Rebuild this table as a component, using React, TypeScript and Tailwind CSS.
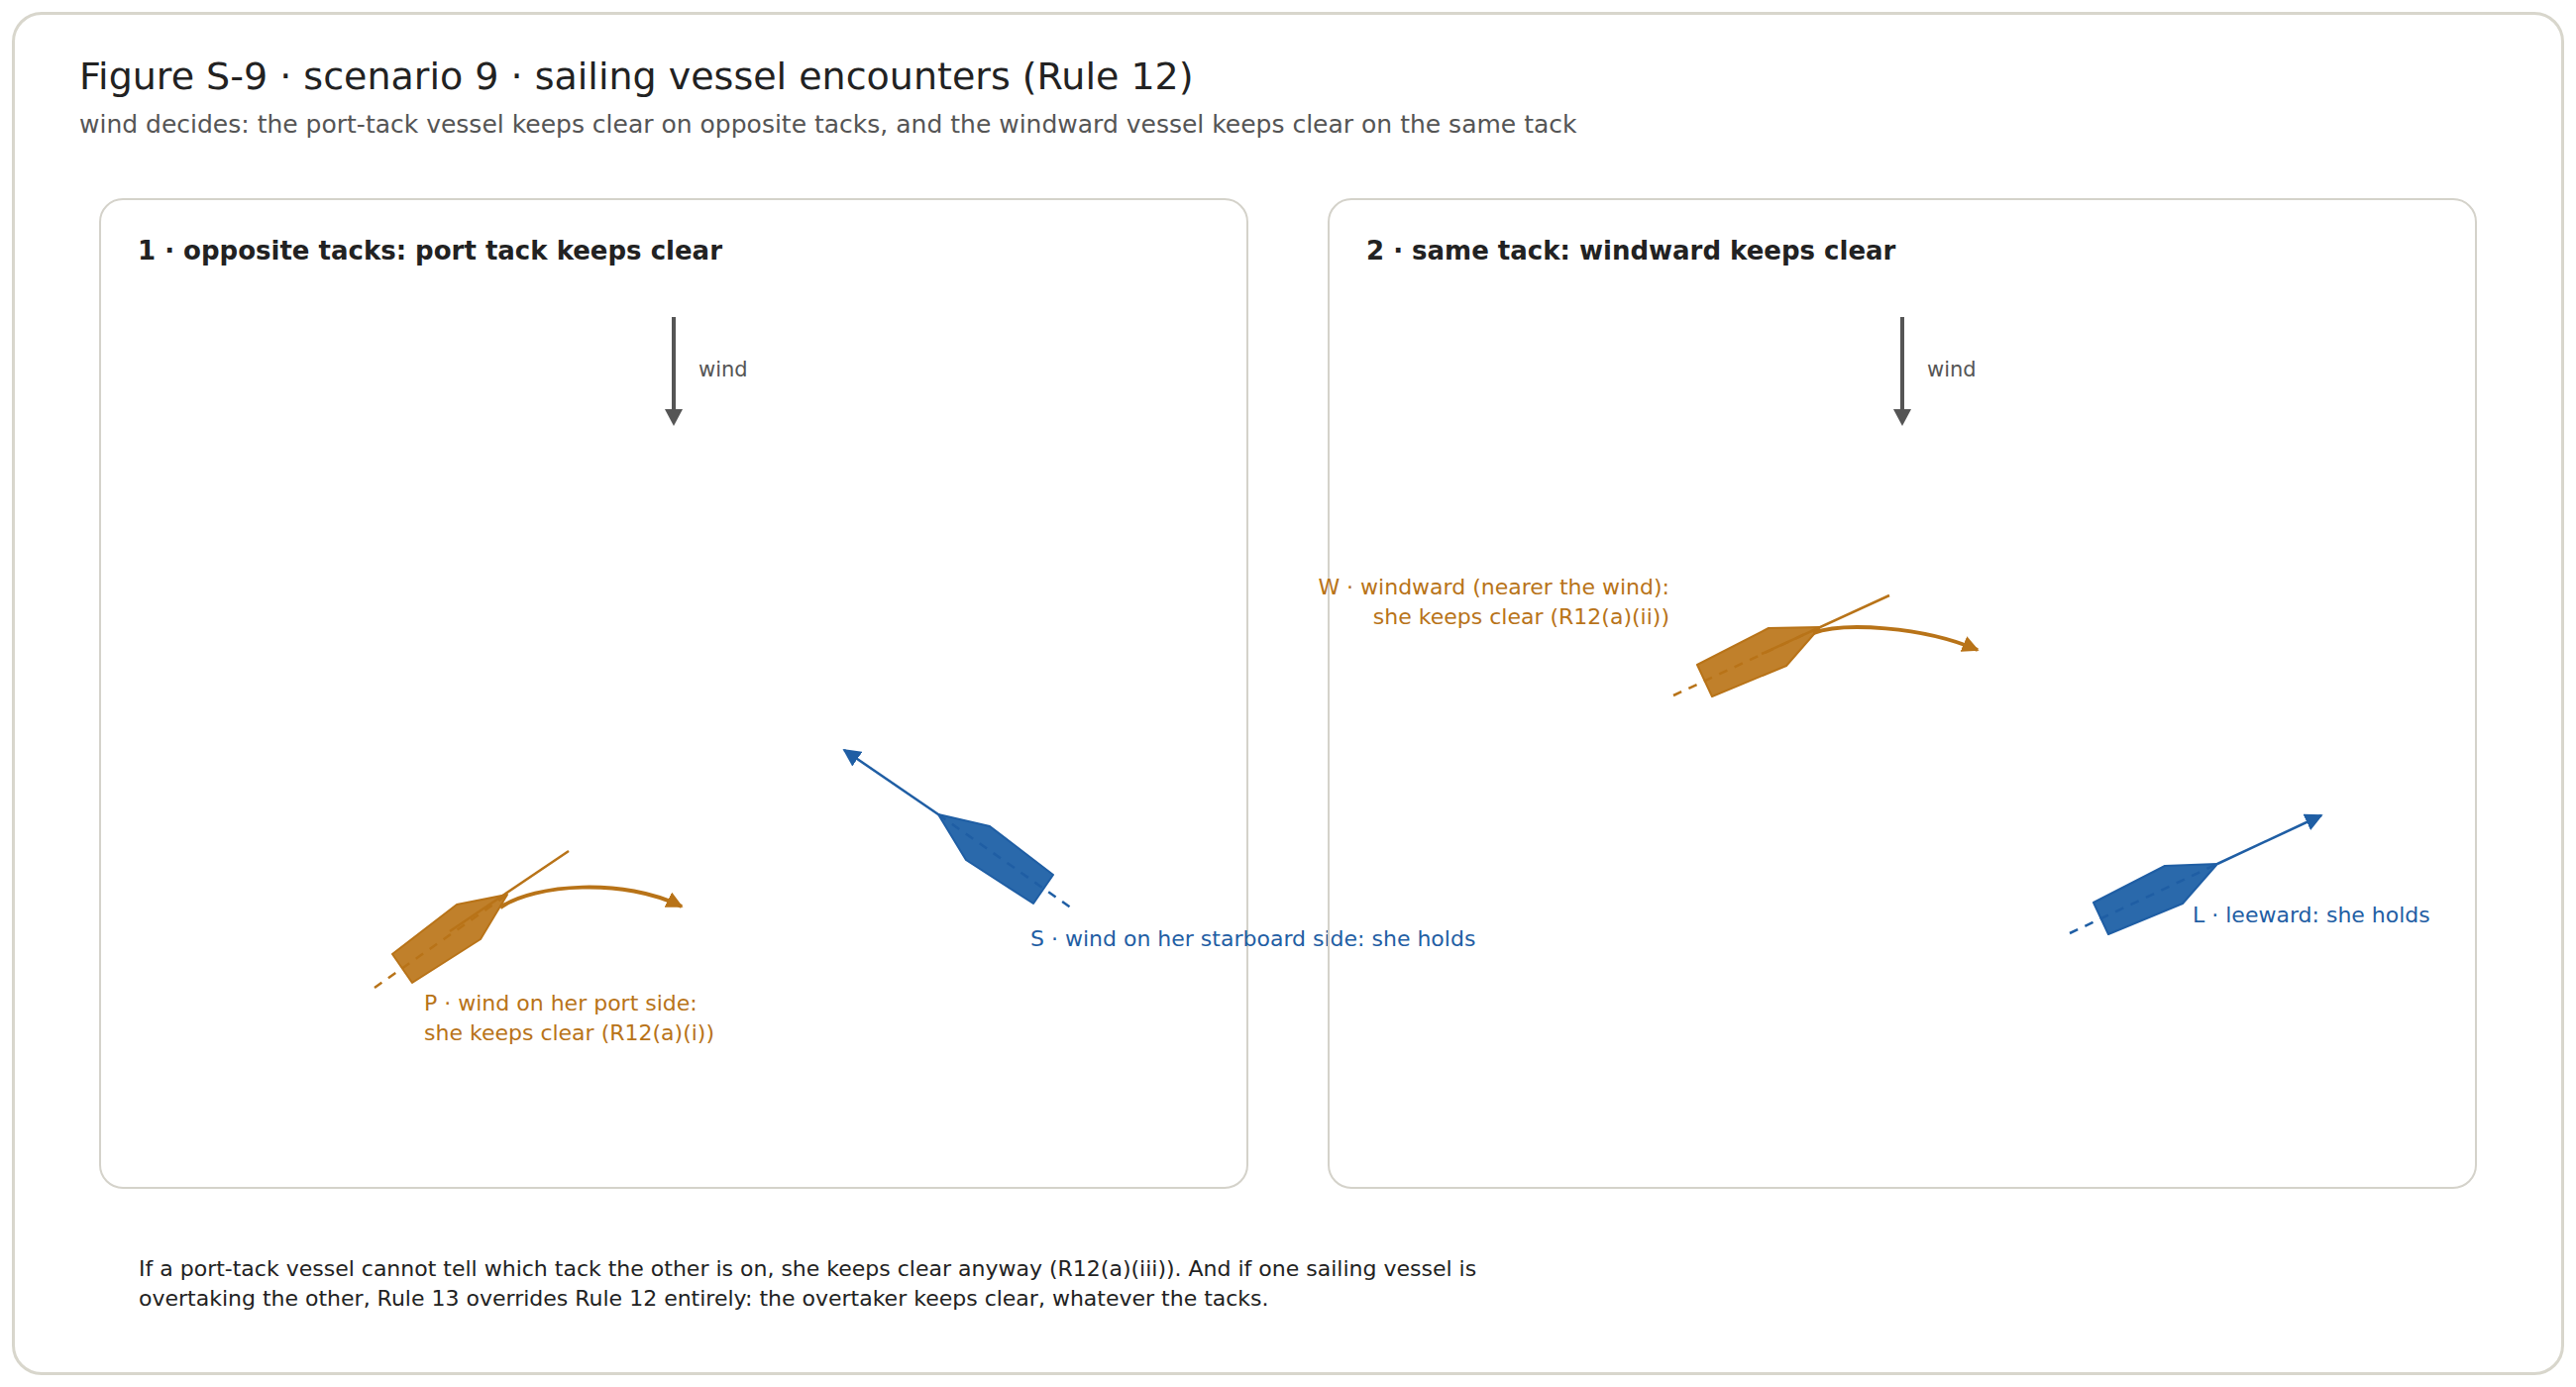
const ORANGE = "#b87318"
const ORANGE_FILL = "#c0802b"
const BLUE = "#1f5ea4"
const BLUE_FILL = "#2a69ab"
const GRAY = "#555555"

function Markers({ id }: { id: string }) {
  return (
    <defs>
      <marker id={`${id}-o`} viewBox="0 0 10 10" refX="9" refY="5" markerUnits="userSpaceOnUse" markerWidth="17" markerHeight="17" orient="auto">
        <path d="M0,0 L10,5 L0,10 z" fill={ORANGE} />
      </marker>
      <marker id={`${id}-b`} viewBox="0 0 10 10" refX="9" refY="5" markerUnits="userSpaceOnUse" markerWidth="18" markerHeight="18" orient="auto">
        <path d="M0,0 L10,5 L0,10 z" fill={BLUE} />
      </marker>
    </defs>
  )
}

function Wind() {
  return (
    <g>
      <line x1="580" y1="120" x2="580" y2="216" stroke={GRAY} strokeWidth="4" />
      <polygon points="571,213 589,213 580,230" fill={GRAY} />
      <text x="605" y="180" fontSize="21" fill={GRAY}>wind</text>
    </g>
  )
}

function Panel({ title, children }: { title: string; children: React.ReactNode }) {
  return (
    <div className="h-[1000px] border-2 border-[#d4d2ca] rounded-[24px] flex flex-col">
      <div className="h-[100px] pt-[35px] pl-[37px] text-[26px] leading-[32px] font-bold text-[#222222]">{title}</div>
      <svg width="1156" height="896" viewBox="2 102 1156 896" className="overflow-visible" style={{ fontFamily: "'DejaVu Sans', sans-serif" }}>
        {children}
      </svg>
    </div>
  )
}

export default function App() {
  return (
    <div className="w-[2600px] h-[1400px] bg-white p-[12px]" style={{ fontFamily: "'DejaVu Sans', 'Liberation Sans', sans-serif" }}>
      <div className="h-full border-[3px] border-[#d8d6cc] rounded-[30px] pt-[39px]">
        <div className="pl-[65px]">
          <h1 className="text-[38px] leading-[46px] text-[#222222]">Figure S-9 · scenario 9 · sailing vessel encounters (Rule 12)</h1>
          <p className="mt-[11px] text-[25px] leading-[30px] text-[#555555]">
            wind decides: the port-tack vessel keeps clear on opposite tacks, and the windward vessel keeps clear on the same tack
          </p>
        </div>

        <div className="mt-[59px] px-[85px] grid grid-cols-2 gap-[80px]">
          <Panel title="1 · opposite tacks: port tack keeps clear">
            <Markers id="p1" />
            <Wind />
            {/* port-tack vessel */}
            <polygon points="296,763 361,713 412,703 385,748 316,792" fill={ORANGE_FILL} stroke={ORANGE} strokeWidth="2" strokeLinejoin="round" />
            <line x1="278" y1="797" x2="412" y2="703" stroke={ORANGE} strokeWidth="2.5" strokeDasharray="9 8" />
            <line x1="354" y1="740" x2="474" y2="659" stroke={ORANGE} strokeWidth="2.5" />
            <path d="M405,716 C440,692 530,686 588,715" fill="none" stroke={ORANGE} strokeWidth="4" markerEnd="url(#p1-o)" />
            <text x="328" y="820" fontSize="22" fill={ORANGE}>P · wind on her port side:</text>
            <text x="328" y="850" fontSize="22" fill={ORANGE}>she keeps clear (R12(a)(i))</text>
            {/* starboard-tack vessel */}
            <polygon points="847,622 899,634 963,683 943,712 875,668" fill={BLUE_FILL} stroke={BLUE} strokeWidth="2" strokeLinejoin="round" />
            <line x1="847" y1="622" x2="982" y2="717" stroke={BLUE} strokeWidth="2.5" strokeDasharray="9 8" />
            <line x1="847" y1="622" x2="752" y2="557" stroke={BLUE} strokeWidth="2.5" markerEnd="url(#p1-b)" />
            <text x="940" y="755" fontSize="22" fill={BLUE}>S · wind on her starboard side: she holds</text>
          </Panel>

          <Panel title="2 · same tack: windward keeps clear">
            <Markers id="p2" />
            <Wind />
            {/* windward vessel */}
            <text x="345" y="400" fontSize="22" fill={ORANGE} textAnchor="end">W · windward (nearer the wind):</text>
            <text x="345" y="430" fontSize="22" fill={ORANGE} textAnchor="end">she keeps clear (R12(a)(ii))</text>
            <polygon points="373,471 445,434 497,433 463,472 388,503" fill={ORANGE_FILL} stroke={ORANGE} strokeWidth="2" strokeLinejoin="round" />
            <line x1="349" y1="502" x2="497" y2="433" stroke={ORANGE} strokeWidth="2.5" strokeDasharray="9 8" />
            <line x1="438" y1="460" x2="567" y2="401" stroke={ORANGE} strokeWidth="2.5" />
            <path d="M490,439 C520,428 600,432 656,456" fill="none" stroke={ORANGE} strokeWidth="4" markerEnd="url(#p2-o)" />
            {/* leeward vessel */}
            <polygon points="773,711 845,674 898,672 863,712 788,743" fill={BLUE_FILL} stroke={BLUE} strokeWidth="2" strokeLinejoin="round" />
            <line x1="749" y1="742" x2="898" y2="672" stroke={BLUE} strokeWidth="2.5" strokeDasharray="9 8" />
            <line x1="898" y1="672" x2="1003" y2="623" stroke={BLUE} strokeWidth="2.5" markerEnd="url(#p2-b)" />
            <text x="873" y="731" fontSize="22" fill={BLUE}>L · leeward: she holds</text>
          </Panel>
        </div>

        <div className="mt-[66px] pl-[125px] text-[22px] leading-[30px] text-[#222222]">
          <div>If a port-tack vessel cannot tell which tack the other is on, she keeps clear anyway (R12(a)(iii)). And if one sailing vessel is</div>
          <div>overtaking the other, Rule 13 overrides Rule 12 entirely: the overtaker keeps clear, whatever the tacks.</div>
        </div>
      </div>
    </div>
  )
}
